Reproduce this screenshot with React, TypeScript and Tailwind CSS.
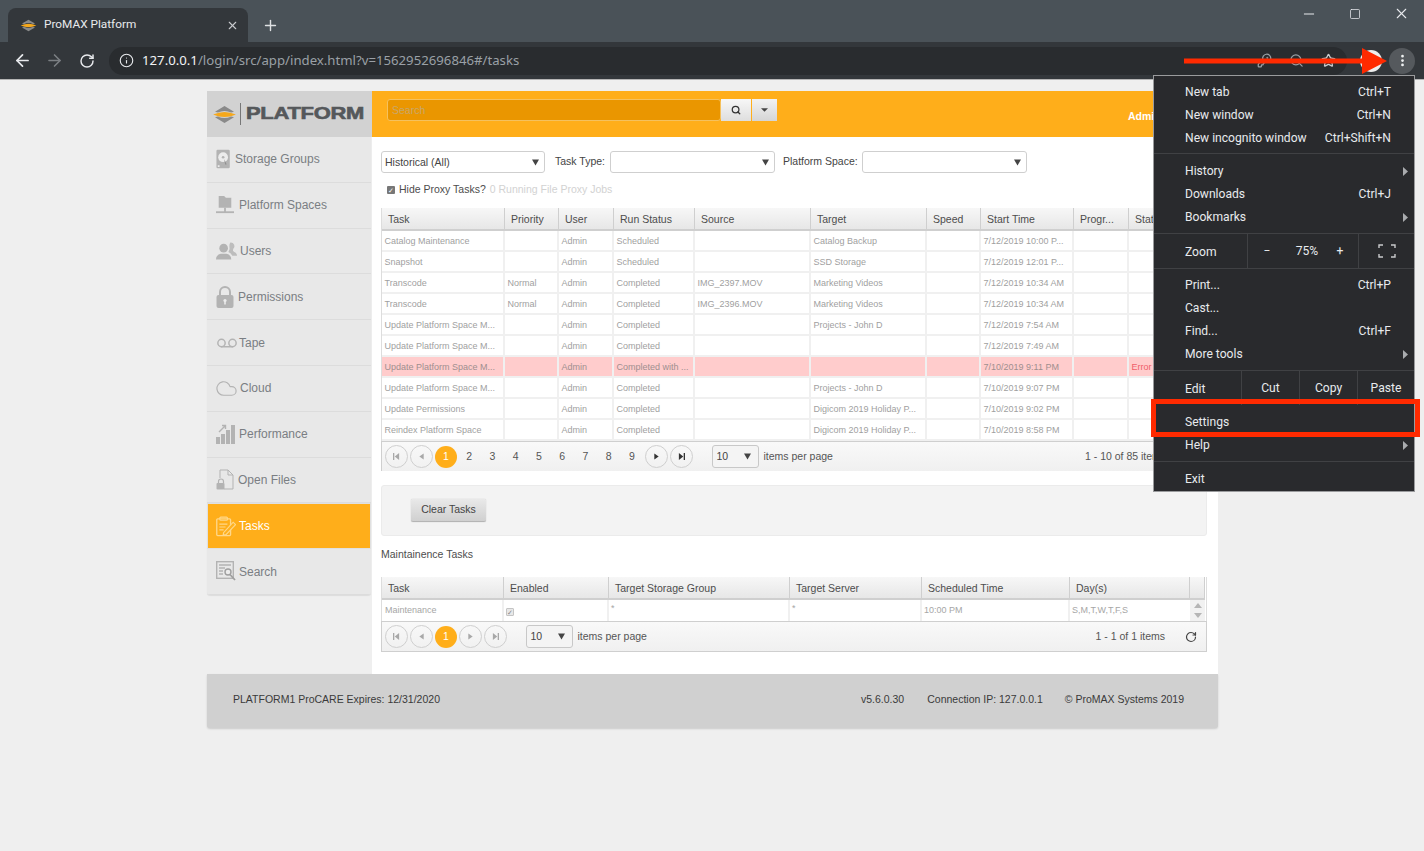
import React from 'react';
import {
  ArrowLeft,
  ArrowRight,
  Cloud,
  EllipsisVertical,
  Info,
  KeyRound,
  Minus,
  Plus,
  RotateCw,
  Search,
  Square,
  Star,
  Voicemail,
  X,
} from 'lucide-react';

/* ---------- drawn icons ---------- */

const PlatformMark: React.FC<{ className?: string }> = ({ className }) => (
  <svg viewBox="0 0 26 20" className={className}>
    <path d="M3 7 L13 1 L23 7 L20 8 Q13 4.5 6 8 Z" fill="#8a8a8a" />
    <path d="M1 10 Q13 4.5 25 10 Q13 15.5 1 10 Z" fill="#f5a81c" />
    <path d="M3 13 L6 12 Q13 15.5 20 12 L23 13 L13 19 Z" fill="#8a8a8a" />
  </svg>
);

const StorageIcon = () => (
  <svg viewBox="0 0 18 22" className="h-[22px] w-[16px]">
    <rect x="0.5" y="0.5" width="15" height="21" rx="1.5" fill="#b3b3b3" />
    <circle cx="8" cy="9" r="5.5" fill="#ececec" />
    <circle cx="8" cy="9" r="1.5" fill="#b3b3b3" />
    <path d="M9 11 L12 17 L10.5 17.5 Z" fill="#8f8f8f" />
    <rect x="2" y="18" width="2" height="2" fill="#ececec" />
  </svg>
);

const SpacesIcon = () => (
  <svg viewBox="0 0 20 22" className="h-[22px] w-[19px]">
    <path d="M3 1 H9 L11 3 H17 V14 H3 Z" fill="#b3b3b3" />
    <rect x="9" y="14" width="2" height="5" fill="#b3b3b3" />
    <rect x="0" y="18" width="20" height="2" fill="#b3b3b3" />
  </svg>
);

const UsersIcon = () => (
  <svg viewBox="0 0 22 20" className="h-[20px] w-[21px] shrink-0">
    <path d="M15 1 a4 4 0 0 1 3 7 q-1 2 1 3 q3 1 3 4 h-5 q-1-3-4-4 q2-3 1-6 q0-3 1-4 Z" fill="#bdbdbd" />
    <circle cx="8" cy="7" r="4.5" fill="#b3b3b3" />
    <path d="M0 19 q0-5 5-6 h6 q5 1 5 6 Z" fill="#b3b3b3" />
  </svg>
);

const LockIcon = () => (
  <svg viewBox="0 0 18 22" className="h-[22px] w-[18px]">
    <path d="M4 10 V6 a5 5 0 0 1 10 0 V10" fill="none" stroke="#b3b3b3" strokeWidth="2" />
    <rect x="0.5" y="9" width="17" height="13" rx="2" fill="#b3b3b3" />
    <circle cx="9" cy="14.5" r="1.6" fill="#ececec" />
    <rect x="8.2" y="15" width="1.6" height="3.5" fill="#ececec" />
  </svg>
);

const PerformanceIcon = () => (
  <svg viewBox="0 0 20 20" className="h-[20px] w-[20px] shrink-0">
    <rect x="0" y="13" width="4" height="7" fill="#b3b3b3" />
    <rect x="5" y="10" width="4" height="10" fill="#b3b3b3" />
    <rect x="10" y="6" width="4" height="14" fill="#b3b3b3" />
    <rect x="15" y="1" width="4" height="19" fill="#b3b3b3" />
    <path d="M3 8 L9 2 M6 1.5 H9.5 V5" fill="none" stroke="#b3b3b3" strokeWidth="1.4" />
  </svg>
);

const OpenFilesIcon = () => (
  <svg viewBox="0 0 18 21" className="h-[21px] w-[18px]">
    <path d="M4 9 V1 H12 L17 6 V20 H8" fill="none" stroke="#b3b3b3" strokeWidth="1" />
    <path d="M12 1 V6 H17" fill="none" stroke="#b3b3b3" strokeWidth="1" />
    <path d="M2.5 14 V12.5 a2.5 2.5 0 0 1 5 0 V14" fill="none" stroke="#b3b3b3" strokeWidth="1.2" />
    <rect x="0.5" y="14" width="8" height="6.5" rx="1" fill="#b3b3b3" />
  </svg>
);

const TasksIcon = () => (
  <svg viewBox="0 0 21 21" className="h-[21px] w-[20px] shrink-0">
    <rect x="0.8" y="2.5" width="14.5" height="17.5" rx="1" fill="none" stroke="#ffd88a" strokeWidth="1.4" />
    <rect x="4" y="0.7" width="8" height="3.2" rx="1" fill="none" stroke="#ffd88a" strokeWidth="1.2" />
    <path d="M3.5 8 H12 M3.5 11 H10 M3.5 14 H8" stroke="#ffd88a" strokeWidth="1.2" />
    <path d="M8 17 L18 6 L20.5 8.5 L10.5 19 L7.5 19.5 Z" fill="#ffb11f" stroke="#ffd88a" strokeWidth="1.2" />
  </svg>
);

const SearchDocIcon = () => (
  <svg viewBox="0 0 20 21" className="h-[21px] w-[20px] shrink-0">
    <rect x="0.7" y="0.7" width="16.6" height="16.6" fill="none" stroke="#b3b3b3" strokeWidth="1.4" />
    <path d="M3 4 H15 M3 7 H9 M3 10 H7 M3 13 H7" stroke="#b3b3b3" strokeWidth="1.5" />
    <circle cx="12" cy="11" r="3" fill="#ececec" stroke="#9f9f9f" strokeWidth="1.4" />
    <path d="M14 13.5 L19 19" stroke="#9f9f9f" strokeWidth="1.8" />
  </svg>
);

const TriangleDown = () => (
  <svg viewBox="0 0 8 7" className="h-[7px] w-[7px]">
    <path d="M0 0 H8 L4 7 Z" fill="#444" />
  </svg>
);

const SubArrow = () => (
  <svg viewBox="0 0 5 9" className="ml-auto -mr-[17px] h-[9px] w-[5px]">
    <path d="M0 0 L5 4.5 L0 9 Z" fill="#a9abae" />
  </svg>
);

/* ---------- chrome parts ---------- */

const MenuItem: React.FC<{ label: string; hint?: string; sub?: boolean }> = ({ label, hint, sub }) => (
  <div className="flex h-[23px] items-center whitespace-nowrap pl-[31px] pr-[23px]">
    <span>{label}</span>
    {hint && <span className="ml-auto">{hint}</span>}
    {sub && <SubArrow />}
  </div>
);

const ChromeMenu = () => (
  <div className="absolute left-[1153px] top-[75px] z-20 h-[417px] w-[262px] border border-[#9a9b9d] bg-[#292a2d] pt-[5px] text-[12.1px] text-[#e8eaed] [font-family:Roboto,sans-serif]">
    <MenuItem label="New tab" hint="Ctrl+T" />
    <MenuItem label="New window" hint="Ctrl+N" />
    <MenuItem label="New incognito window" hint="Ctrl+Shift+N" />
    <div className="mt-[3px] mb-[6px] h-px bg-[#404144]" />
    <MenuItem label="History" sub />
    <MenuItem label="Downloads" hint="Ctrl+J" />
    <MenuItem label="Bookmarks" sub />
    <div className="mt-[4px] h-px bg-[#404144]" />
    <div className="flex h-[34px] items-center">
      <span className="mt-[2px] w-[93px] pl-[31px]">Zoom</span>
      <div className="flex h-full flex-1 items-center border-x border-[#404144]">
        <span className="w-[38px] text-center">−</span>
        <span className="w-[42px] text-center">75%</span>
        <span className="w-[24px] text-center">+</span>
      </div>
      <div className="flex w-[55px] justify-center">
        <svg viewBox="0 0 18 14" className="h-[14px] w-[18px]">
          <path d="M1 4 V1 H5 M13 1 H17 V4 M17 10 V13 H13 M5 13 H1 V10" fill="none" stroke="#c9cacc" strokeWidth="1.4" />
        </svg>
      </div>
    </div>
    <div className="h-px bg-[#404144]" />
    <div className="h-[5px]" />
    <MenuItem label="Print..." hint="Ctrl+P" />
    <MenuItem label="Cast..." />
    <MenuItem label="Find..." hint="Ctrl+F" />
    <MenuItem label="More tools" sub />
    <div className="mt-[4px] h-px bg-[#404144]" />
    <div className="flex h-[34px] items-center">
      <span className="mt-[2px] w-[87px] pl-[31px]">Edit</span>
      <span className="flex h-full w-[58px] items-center justify-center border-l border-[#404144]">Cut</span>
      <span className="flex h-full w-[58px] items-center justify-center border-l border-[#404144]">Copy</span>
      <span className="flex h-full flex-1 items-center justify-center border-l border-[#404144]">Paste</span>
    </div>
    <div className="h-[6px]" />
    <MenuItem label="Settings" />
    <MenuItem label="Help" sub />
    <div className="mt-[4px] mb-[6px] h-px bg-[#404144]" />
    <MenuItem label="Exit" />
  </div>
);

const BrowserBar = () => (
  <div className="[font-family:'Noto_Sans',sans-serif]">
    {/* tab strip */}
    <div className="flex h-[42px] items-end bg-[#4a5258] pl-[8px]">
      <div className="flex h-[34px] w-[240px] items-center rounded-t-[8px] bg-[#33373b] pl-[12px] pr-[9px] text-[11.8px] text-[#e8eaed] [font-family:Roboto,sans-serif]">
        <PlatformMark className="mr-[7px] h-[13px] w-[17px]" />
        <span>ProMAX Platform</span>
        <X size={13} strokeWidth={2} className="ml-auto text-[#c9cbce]" />
      </div>
      <div className="mb-[8px] ml-[14px] text-[#dfe1e3]">
        <Plus size={17} strokeWidth={2} />
      </div>
      <div className="mb-[20px] ml-auto flex items-center gap-[32px] pr-[14px] text-[#e8eaed]">
        <Minus size={16} strokeWidth={1.5} />
        <Square size={12} strokeWidth={1.5} />
        <X size={17} strokeWidth={1.5} />
      </div>
    </div>
    {/* toolbar */}
    <div className="flex h-[37px] items-center bg-[#33373b] pl-[13px] pr-[9px]">
      <ArrowLeft size={19} strokeWidth={2.2} className="text-[#e8eaed]" />
      <ArrowRight size={19} strokeWidth={2} className="ml-[13px] text-[#7b7f83]" />
      <RotateCw size={16} strokeWidth={2.2} className="ml-[15px] text-[#e8eaed]" />
      <div className="ml-[14px] flex h-[28px] flex-1 items-center rounded-full bg-[#292c2f] pl-[10px] pr-[11px]">
        <Info size={15} strokeWidth={1.8} className="text-[#e8eaed]" />
        <span className="ml-[8px] text-[13.2px] text-[#9aa0a6]">
          <span className="text-[#f1f3f4]">127.0.0.1</span>/login/src/app/index.html?v=1562952696846#/tasks
        </span>
        <KeyRound size={15} className="ml-auto text-[#9aa0a6]" />
        <Search size={15} className="ml-[17px] text-[#9aa0a6]" />
        <Star size={15} className="ml-[17px] text-[#c9cbce]" />
      </div>
      <div className="ml-[13px] h-[22px] w-[22px] rounded-full bg-[#eeeeee]" />
      <div className="ml-[7px] flex h-[26px] w-[26px] items-center justify-center rounded-full bg-[#55595d] text-[#f1f3f4]">
        <EllipsisVertical size={15} strokeWidth={2.4} />
      </div>
    </div>
    <div className="h-px bg-[#b5b5b5]" />
  </div>
);

/* ---------- app sidebar ---------- */

const navItems: { label: string; icon: React.ReactNode; textClass: string; active?: boolean }[] = [
  { label: 'Storage Groups', icon: <StorageIcon />, textClass: 'ml-[1px]' },
  { label: 'Platform Spaces', icon: <SpacesIcon />, textClass: 'ml-[5px]' },
  { label: 'Users', icon: <UsersIcon />, textClass: 'ml-[6px]' },
  { label: 'Permissions', icon: <LockIcon />, textClass: 'ml-[4px]' },
  { label: 'Tape', icon: <Voicemail size={22} strokeWidth={1.6} className="shrink-0 text-[#b3b3b3]" />, textClass: 'ml-[5px]' },
  { label: 'Cloud', icon: <Cloud size={23} strokeWidth={1.2} className="-ml-[1px] shrink-0 text-[#b3b3b3]" />, textClass: 'ml-[6px]' },
  { label: 'Performance', icon: <PerformanceIcon />, textClass: 'ml-[5px]' },
  { label: 'Open Files', icon: <OpenFilesIcon />, textClass: 'ml-[4px]' },
  { label: 'Tasks', icon: <TasksIcon />, textClass: 'ml-[5px]', active: true },
  { label: 'Search', icon: <SearchDocIcon />, textClass: 'ml-[5px]' },
];

const Sidebar = () => (
  <div className="w-[165px] shrink-0 self-start">
    <div className="flex h-[46px] items-center bg-[#d2d2d2] pl-[5px]">
      <PlatformMark className="h-[19px] w-[25px]" />
      <div className="ml-[3px] h-[22px] w-px bg-[#777]" />
      <span className="ml-[5px] origin-left scale-x-[1.29] text-[17px] font-bold tracking-[-0.2px] text-[#55585b] [-webkit-text-stroke:0.6px_#55585b]">
        PLATFORM
      </span>
    </div>
    <div className="mr-[1px] overflow-hidden rounded-b-[3px] bg-[#e8e8e8] shadow-[0_1px_1px_rgba(0,0,0,0.08)]">
      {navItems.map((item) => (
        <div
          key={item.label}
          className={
            item.active
              ? 'flex h-[45.8px] items-center border-y border-x border-[#e0e0e0] bg-[#ffae1a] pl-[8px] text-white'
              : 'flex h-[45.8px] items-center border-b border-[#dcdcdc] pl-[9px] text-[#7a7e83]'
          }
        >
          <div className="flex w-[18px] justify-start">{item.icon}</div>
          <span className={`${item.textClass} text-[12px]`}>{item.label}</span>
        </div>
      ))}
    </div>
  </div>
);

/* ---------- form bits ---------- */

const SelectBox: React.FC<{ value?: string; className: string }> = ({ value, className }) => (
  <div className={`flex h-[22px] items-center rounded-[3px] border border-[#cfcfcf] bg-white pl-[3px] pr-[5px] text-[10.5px] text-[#444] ${className}`}>
    <span className="pt-[1px]">{value}</span>
    <span className="ml-auto">
      <TriangleDown />
    </span>
  </div>
);

type PageIconKind = 'first' | 'prev' | 'next' | 'last';

const PageIcon: React.FC<{ kind: PageIconKind; dim?: boolean }> = ({ kind, dim }) => {
  const fill = dim ? '#a8a8a8' : '#333';
  return (
    <div className="flex h-[23px] w-[23px] items-center justify-center rounded-full border border-[#cfcfcf]">
      <svg viewBox="0 0 8 8" className="h-[7px] w-[7px]">
        {kind === 'first' && <path d="M0 0 H1.5 V8 H0 Z M7 0 V8 L2 4 Z" fill={fill} />}
        {kind === 'prev' && <path d="M6.5 0.5 V7.5 L1.5 4 Z" fill={fill} />}
        {kind === 'next' && <path d="M1.5 0.5 V7.5 L6.5 4 Z" fill={fill} />}
        {kind === 'last' && <path d="M1 0 V8 L6 4 Z M6.5 0 H8 V8 H6.5 Z" fill={fill} />}
      </svg>
    </div>
  );
};

const PageNumbers: React.FC<{ count: number }> = ({ count }) => (
  <div className="flex items-center">
    {Array.from({ length: count }).map((_, i) =>
      i === 0 ? (
        <div key={i} className="ml-[2px] mr-[0.5px] flex h-[22px] w-[22px] items-center justify-center rounded-full bg-[#ffae1a] text-white">
          1
        </div>
      ) : (
        <div key={i} className="flex w-[23.25px] justify-center text-[#555]">
          {i + 1}
        </div>
      ),
    )}
  </div>
);

const PageSize = () => (
  <div className="flex h-[23px] w-[47px] items-center rounded-[3px] border border-[#c8c8c8] bg-[#f4f4f4] pl-[4px] pr-[7px] text-[10.5px] text-[#444]">
    10
    <span className="ml-auto">
      <TriangleDown />
    </span>
  </div>
);

/* ---------- tables ---------- */

const taskCols =
  'grid grid-cols-[123px_54px_55px_81px_116px_116px_54px_93px_55px_77px]';
const taskHeaders = ['Task', 'Priority', 'User', 'Run Status', 'Source', 'Target', 'Speed', 'Start Time', 'Progr...', 'Status'];

const taskRows: { cells: string[]; error?: boolean }[] = [
  { cells: ['Catalog Maintenance', '', 'Admin', 'Scheduled', '', 'Catalog Backup', '', '7/12/2019 10:00 P...', '', ''] },
  { cells: ['Snapshot', '', 'Admin', 'Scheduled', '', 'SSD Storage', '', '7/12/2019 12:01 P...', '', ''] },
  { cells: ['Transcode', 'Normal', 'Admin', 'Completed', 'IMG_2397.MOV', 'Marketing Videos', '', '7/12/2019 10:34 AM', '', ''] },
  { cells: ['Transcode', 'Normal', 'Admin', 'Completed', 'IMG_2396.MOV', 'Marketing Videos', '', '7/12/2019 10:34 AM', '', ''] },
  { cells: ['Update Platform Space M...', '', 'Admin', 'Completed', '', 'Projects - John D', '', '7/12/2019 7:54 AM', '', ''] },
  { cells: ['Update Platform Space M...', '', 'Admin', 'Completed', '', '', '', '7/12/2019 7:49 AM', '', ''] },
  { cells: ['Update Platform Space M...', '', 'Admin', 'Completed with ...', '', '', '', '7/10/2019 9:11 PM', '', 'Error'], error: true },
  { cells: ['Update Platform Space M...', '', 'Admin', 'Completed', '', 'Projects - John D', '', '7/10/2019 9:07 PM', '', ''] },
  { cells: ['Update Permissions', '', 'Admin', 'Completed', '', 'Digicom 2019 Holiday P...', '', '7/10/2019 9:02 PM', '', ''] },
  { cells: ['Reindex Platform Space', '', 'Admin', 'Completed', '', 'Digicom 2019 Holiday P...', '', '7/10/2019 8:58 PM', '', ''] },
];

const HeaderCell: React.FC<{ label: string }> = ({ label }) => (
  <div className="flex h-[23px] items-center overflow-hidden whitespace-nowrap border-r border-b-2 border-[#cfcfcf] bg-gradient-to-b from-[#f7f7f7] to-[#e7e7e7] pl-[6px] pt-[2px] text-[10.5px] text-[#4d4d4d]">
    {label}
  </div>
);

const TaskTable = () => (
  <div className="border-l border-[#dddddd]">
    <div className={taskCols}>
      {taskHeaders.map((h) => (
        <HeaderCell key={h} label={h} />
      ))}
    </div>
    {taskRows.map((row, r) => (
      <div key={r} className={taskCols}>
        {row.cells.map((cell, c) => (
          <div
            key={c}
            className={`flex h-[21px] items-center overflow-hidden whitespace-nowrap border-r-2 border-b-2 border-[#f0f0f0] pl-[2.5px] pt-[2px] text-[9px] ${
              row.error ? 'bg-[#ffcccc]' : 'bg-white'
            } ${cell === 'Error' ? 'text-[#f0606a]' : row.error ? 'text-[#a08f8f]' : 'text-[#9f9f9f]'}`}
          >
            {cell}
          </div>
        ))}
      </div>
    ))}
  </div>
);

const maintCols = 'grid grid-cols-[122px_105px_181px_132px_148px_120px_15px]';

const MaintenanceTable = () => (
  <div className="border-l border-r border-[#dddddd]">
    <div className={maintCols}>
      {['Task', 'Enabled', 'Target Storage Group', 'Target Server', 'Scheduled Time', 'Day(s)', ''].map((h, i) => (
        <HeaderCell key={i} label={h} />
      ))}
    </div>
    <div className={`${maintCols} h-[21px] text-[9px] text-[#a6a6a6]`}>
      <div className="flex items-center border-r-2 border-[#f0f0f0] pl-[3px]">Maintenance</div>
      <div className="flex items-end border-r-2 border-[#f0f0f0] pb-[5px] pl-[2px]">
        <span className="flex h-[8px] w-[8px] items-center justify-center rounded-[1px] border border-[#c4c4c4] bg-[#e8e8e8] text-[7px] leading-none text-[#888]">
          ✓
        </span>
      </div>
      <div className="border-r-2 border-[#f0f0f0] pl-[2px] pt-[2px]">*</div>
      <div className="border-r-2 border-[#f0f0f0] pl-[2px] pt-[2px]">*</div>
      <div className="flex items-center border-r-2 border-[#f0f0f0] pl-[2px]">10:00 PM</div>
      <div className="flex items-center pl-[2px]">S,M,T,W,T,F,S</div>
      <div className="flex flex-col items-center justify-center gap-[5px] bg-[#f1f1f1]">
        <svg viewBox="0 0 8 5" className="h-[5px] w-[8px]"><path d="M0 5 L4 0 L8 5 Z" fill="#b5b5b5" /></svg>
        <svg viewBox="0 0 8 5" className="h-[5px] w-[8px]"><path d="M0 0 L8 0 L4 5 Z" fill="#b5b5b5" /></svg>
      </div>
    </div>
  </div>
);

/* ---------- page ---------- */

const MainPanel = () => (
  <div className="h-[583px] flex-1 bg-white">
    <div className="flex h-[46px] items-start bg-[#ffae1a] pl-[15px] pt-[8px]">
      <div className="flex h-[22px] w-[334px] items-center rounded-[3px] border border-[#f5c15e] bg-[#ea9600] pl-[4px] pt-[2px] text-[10.5px] text-[#c8a66a]">
        Search
      </div>
      <div className="flex h-[22px] w-[30px] items-center justify-center bg-gradient-to-b from-[#f7f7f7] to-[#dedede] text-[#333]">
        <Search size={10} strokeWidth={3} />
      </div>
      <div className="ml-[1px] flex h-[22px] w-[25px] items-center justify-center bg-gradient-to-b from-[#f2f2f2] to-[#d5d5d5]">
        <svg viewBox="0 0 8 4" className="h-[4px] w-[7px]"><path d="M0 0 H8 L4 4 Z" fill="#444" /></svg>
      </div>
      <span className="ml-[351px] mt-[10px] text-[10.5px] font-bold text-white">Admin</span>
    </div>

    <div className="pl-[9px] pr-[11px] pt-[14px]">
      <div className="flex items-center text-[10.5px] text-[#444]">
        <SelectBox value="Historical (All)" className="w-[164px]" />
        <span className="ml-[10px] w-[55px] -mt-[1px]">Task Type:</span>
        <SelectBox className="w-[165px]" />
        <span className="ml-[8px] w-[79px] -mt-[1px]">Platform Space:</span>
        <SelectBox className="w-[165px]" />
      </div>
      <div className="mt-[10px] flex h-[14px] items-center pl-[6px] text-[10.5px]">
        <span className="flex h-[8px] w-[8px] items-center justify-center rounded-[1px] bg-[#777] text-[7px] leading-none text-white">✓</span>
        <span className="ml-[4px] text-[#4d4d4d]">Hide Proxy Tasks?</span>
        <span className="ml-[4px] text-[#d2d2d2]">0 Running File Proxy Jobs</span>
      </div>

      <div className="mt-[11px]">
        <TaskTable />
        <div className="flex h-[30px] items-center whitespace-nowrap border-t border-l border-[#cfcfcf] bg-gradient-to-b from-[#f9f9f9] to-[#f0f0f0] pl-[3px] text-[10.5px]">
          <PageIcon kind="first" dim />
          <div className="w-[2px]" />
          <PageIcon kind="prev" dim />
          <PageNumbers count={9} />
          <div className="w-[1px]" />
          <PageIcon kind="next" />
          <div className="w-[2px]" />
          <PageIcon kind="last" />
          <div className="w-[19px]" />
          <PageSize />
          <span className="ml-[5px] text-[#555]">items per page</span>
          <span className="ml-[252px] text-[#555]">1 - 10 of 85 items</span>
        </div>
      </div>

      <div className="mt-[14px] flex h-[51px] items-center rounded-[3px] border border-[#ebebeb] bg-[#f3f3f3] pl-[29px]">
        <button className="h-[23px] w-[75px] rounded-[2px] border-b border-[#b5b5b5] bg-gradient-to-b from-[#e9e9e9] to-[#d0d0d0] text-[10.5px] text-[#444] shadow-[0_0_1px_rgba(0,0,0,0.3)]">
          Clear Tasks
        </button>
      </div>

      <div className="mt-[11px] h-[14px] text-[10.5px] leading-[14px] text-[#4d4d4d]">Maintainence Tasks</div>

      <div className="mt-[16px]">
        <MaintenanceTable />
        <div className="flex h-[31px] items-center whitespace-nowrap border border-[#cfcfcf] bg-gradient-to-b from-[#f9f9f9] to-[#f0f0f0] pl-[3px] pr-[4px] text-[10.5px]">
          <PageIcon kind="first" dim />
          <div className="w-[2px]" />
          <PageIcon kind="prev" dim />
          <PageNumbers count={1} />
          <div className="w-[1px]" />
          <PageIcon kind="next" dim />
          <div className="w-[2px]" />
          <PageIcon kind="last" dim />
          <div className="w-[19px]" />
          <PageSize />
          <span className="ml-[5px] text-[#555]">items per page</span>
          <span className="ml-auto text-[#555]">1 - 1 of 1 items</span>
          <RotateCw size={12} strokeWidth={2.4} className="ml-[20px] mr-[5px] text-[#444]" />
        </div>
      </div>
    </div>
  </div>
);

const Footer = () => (
  <div className="flex h-[54px] items-center rounded-b-[3px] bg-[#d0d0d0] pb-[2px] pl-[26px] pr-[34px] text-[10.5px] text-[#3a3a3a] shadow-[0_1px_2px_rgba(0,0,0,0.15)]">
    <span>PLATFORM1 ProCARE Expires: 12/31/2020</span>
    <span className="ml-auto">v5.6.0.30</span>
    <span className="ml-[23px]">Connection IP: 127.0.0.1</span>
    <span className="ml-[22px]">© ProMAX Systems 2019</span>
  </div>
);

const Annotations = () => (
  <>
    {/* red arrow pointing at the menu button */}
    <svg viewBox="0 0 204 26" className="absolute left-[1184px] top-[48px] z-30 h-[26px] w-[204px]">
      <path d="M0 10.5 H178 V0 L203 13 L178 26 V15.5 H0 Z" fill="#ff2a00" />
    </svg>
    {/* red frame round Settings */}
    <div className="absolute left-[1151px] top-[399px] z-30 h-[38px] w-[269px] border-[5px] border-[#ff2a00]" />
  </>
);

export default function App() {
  return (
    <div className="relative h-[851px] w-[1424px] overflow-hidden bg-[#efefef] [font-family:'Liberation_Sans',Arial,sans-serif]">
      <BrowserBar />
      <div className="ml-[207px] mt-[11px] w-[1011px]">
        <div className="flex">
          <Sidebar />
          <MainPanel />
        </div>
        <Footer />
      </div>
      <ChromeMenu />
      <Annotations />
    </div>
  );
}
